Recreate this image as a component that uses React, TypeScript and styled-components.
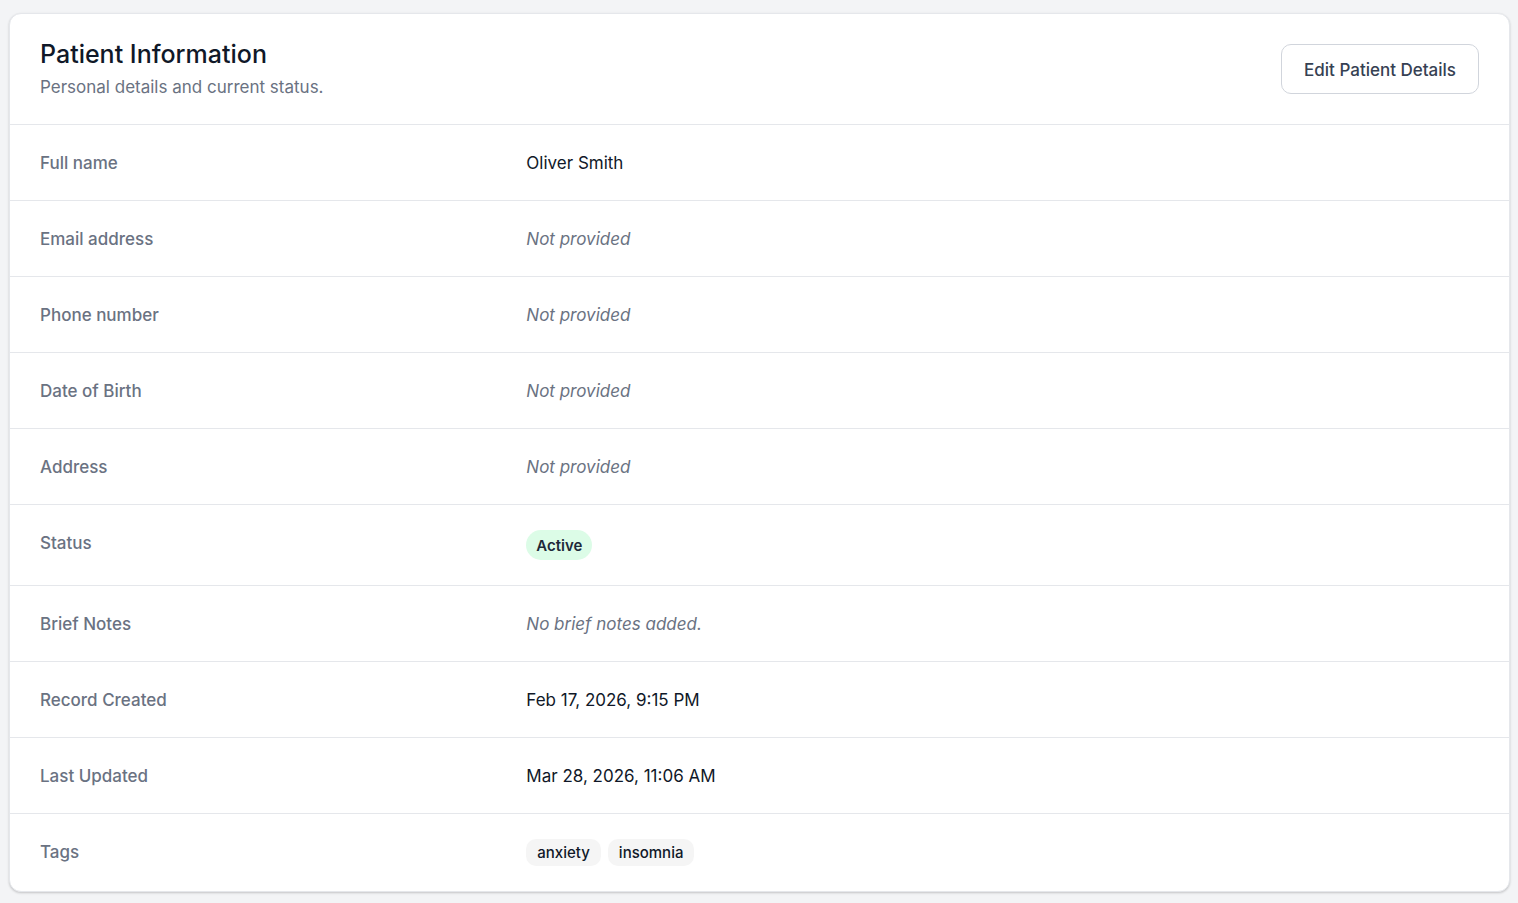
import React from 'react';
import styled, { createGlobalStyle } from 'styled-components';

const GlobalStyle = createGlobalStyle`
  *, *::before, *::after { box-sizing: border-box; }
  body {
    margin: 0;
    background: #f3f4f6;
    color: #101828;
    font-family: Inter, 'Liberation Sans', sans-serif;
    font-size: 17px;
    line-height: 23px;
  }
`;

const Page = styled.main`
  padding: 13px 8px 11px 9px;
`;

const Card = styled.section`
  background: #ffffff;
  border: 1px solid #e5e7eb;
  border-radius: 12px;
  box-shadow: 0 1px 3px rgba(0, 0, 0, 0.1), 0 1px 2px rgba(0, 0, 0, 0.1);
`;

const Header = styled.header`
  display: flex;
  align-items: center;
  justify-content: space-between;
  padding: 25px 30px;
`;

const Title = styled.h2`
  margin: 0 0 7px;
  font-size: 25px;
  font-weight: 500;
  line-height: 30px;
`;

const Subtitle = styled.p`
  margin: 0;
  color: #6a7282;
`;

const EditButton = styled.button`
  height: 50px;
  padding: 2px 22px 0;
  border: 1px solid #d1d5dc;
  border-radius: 10px;
  background: #ffffff;
  color: #364153;
  font: inherit;
  font-weight: 500;
  cursor: pointer;
`;

const Details = styled.dl`
  margin: 0;
`;

const Row = styled.div`
  display: grid;
  grid-template-columns: repeat(3, 1fr);
  column-gap: 20px;
  padding: 25px 30px;
  border-top: 1px solid #e5e7eb;
`;

const Label = styled.dt`
  padding-top: 2px;
  color: #6a7282;
  font-weight: 500;
`;

const TextValue = styled.dd<{ $empty?: boolean }>`
  grid-column: span 2;
  margin: 0;
  padding-top: 2px;
  color: ${({ $empty }) => ($empty ? '#6a7282' : '#101828')};
  font-style: ${({ $empty }) => ($empty ? 'italic' : 'normal')};
`;

const BadgeValue = styled.dd`
  grid-column: span 2;
  display: flex;
  flex-wrap: wrap;
  gap: 7px;
  margin: 0;
`;

const StatusBadge = styled.span`
  padding: 6px 10px 4px;
  border-radius: 15px;
  background: #dcfce7;
  color: #1e2939;
  font-size: 15px;
  font-weight: 600;
  line-height: 20px;
`;

const Tag = styled.span`
  padding: 3px 11px;
  border-radius: 10px;
  background: #f5f5f5;
  color: #101828;
  font-size: 15px;
  font-weight: 500;
  line-height: 21px;
`;

type Field = {
  label: string;
  value?: string;
  placeholder?: string;
  badges?: React.ReactNode;
};

const fields: Field[] = [
  { label: 'Full name', value: 'Oliver Smith' },
  { label: 'Email address' },
  { label: 'Phone number' },
  { label: 'Date of Birth' },
  { label: 'Address' },
  { label: 'Status', badges: <StatusBadge>Active</StatusBadge> },
  { label: 'Brief Notes', placeholder: 'No brief notes added.' },
  { label: 'Record Created', value: 'Feb 17, 2026, 9:15 PM' },
  { label: 'Last Updated', value: 'Mar 28, 2026, 11:06 AM' },
  { label: 'Tags', badges: <><Tag>anxiety</Tag><Tag>insomnia</Tag></> },
];

export default function App() {
  return (
    <>
      <GlobalStyle />
      <Page>
        <Card>
          <Header>
            <div>
              <Title>Patient Information</Title>
              <Subtitle>Personal details and current status.</Subtitle>
            </div>
            <EditButton type="button">Edit Patient Details</EditButton>
          </Header>
          <Details>
            {fields.map(({ label, value, placeholder = 'Not provided', badges }) => (
              <Row key={label}>
                <Label>{label}</Label>
                {badges ? (
                  <BadgeValue>{badges}</BadgeValue>
                ) : (
                  <TextValue $empty={!value}>{value ?? placeholder}</TextValue>
                )}
              </Row>
            ))}
          </Details>
        </Card>
      </Page>
    </>
  );
}
